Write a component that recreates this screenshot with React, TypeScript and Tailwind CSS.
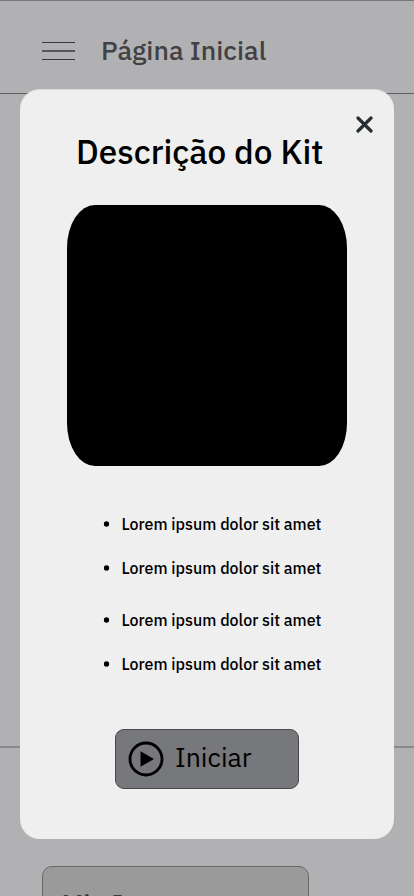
import type { ReactNode } from "react";

const items = ["mt-[48px]", "mt-[24px]", "mt-[32px]", "mt-[24px]"];

function Label({ className, children }: { className: string; children: ReactNode }) {
  return <span className={`block whitespace-nowrap ${className}`}>{children}</span>;
}

function HomePage() {
  return (
    <div className="flex h-full flex-col">
      <header className="flex h-[94px] shrink-0 items-center border-y border-t-[#767678] border-b-[#5e5e60] pt-[7px] pl-[42px]">
        <svg className="h-[20px] w-[33px] shrink-0" viewBox="0 0 33 20" stroke="#38383a">
          <path d="M0 1.5h33M0 18.5h33" strokeWidth="1.1" />
          <path d="M0 10h33" strokeWidth="1.6" />
        </svg>
        <Label className="-mt-[2px] ml-[26px] text-[26.67px] leading-[34px] font-medium text-[#414143]">
          Página Inicial
        </Label>
      </header>
      <div className="h-[652px] shrink-0" />
      <div className="h-[2px] shrink-0 bg-[#8a8a8c]" />
      <div className="mt-[118px] ml-[41.5px] h-[120px] w-[267.5px] shrink-0 rounded-[10px] border border-[#69696b] bg-[#9a9a9b] pt-[19px] pl-[19px]">
        <Label className="text-[26.67px] leading-[34px] font-medium text-[#39393b]">Min I</Label>
      </div>
    </div>
  );
}

export default function App() {
  return (
    <div className="relative h-[896px] w-[414px] overflow-hidden bg-[#b1b1b3] font-['IBM_Plex_Sans',Inter,sans-serif]">
      <HomePage />
      <section
        role="dialog"
        className="absolute top-[89px] left-[20px] flex h-[750px] w-[374px] flex-col items-center rounded-[20px] border-t border-[#dededf] bg-[#efefef]"
      >
        <button className="mt-[26px] mr-[21.5px] h-[17px] w-[17px] self-end" aria-label="Fechar">
          <svg viewBox="0 0 17 17" stroke="#263034" strokeWidth="3.2" strokeLinecap="round">
            <path d="M2 2L15 15M15 2L2 15" />
          </svg>
        </button>
        <h1 className="-mt-[3px] flex h-[44px] w-full items-center pl-[56px]">
          <Label className="text-[33.33px] font-medium">Descrição do Kit</Label>
        </h1>
        <div className="mt-[31px] h-[261px] w-[280px] shrink-0 rounded-[28px/43px] bg-black" />
        <ul className="w-[218px] translate-x-[5.5px]">
          {items.map((gap, index) => (
            <li key={index} className={`flex h-[20px] items-center ${gap}`}>
              <svg className="mr-[12px] h-[6px] w-[6px] shrink-0" viewBox="0 0 6 6">
                <circle cx="3" cy="3" r="2.7" />
              </svg>
              <Label className="text-[16px] leading-[20px] font-medium">Lorem ipsum dolor sit amet</Label>
            </li>
          ))}
        </ul>
        <button className="mt-[55px] flex h-[60px] w-[184px] shrink-0 items-center rounded-[9px] border border-[#48484a] bg-[#77787b] pl-[12px]">
          <svg className="h-[36px] w-[36px] shrink-0" viewBox="0 0 36 36">
            <circle cx="18" cy="18" r="16" fill="none" stroke="#000" strokeWidth="2.8" />
            <path d="M12.5 10.2L26 18L12.5 25.8Z" />
          </svg>
          <Label className="-mt-[4px] ml-[11px] text-[26.67px] leading-[34px]">Iniciar</Label>
        </button>
      </section>
    </div>
  );
}
